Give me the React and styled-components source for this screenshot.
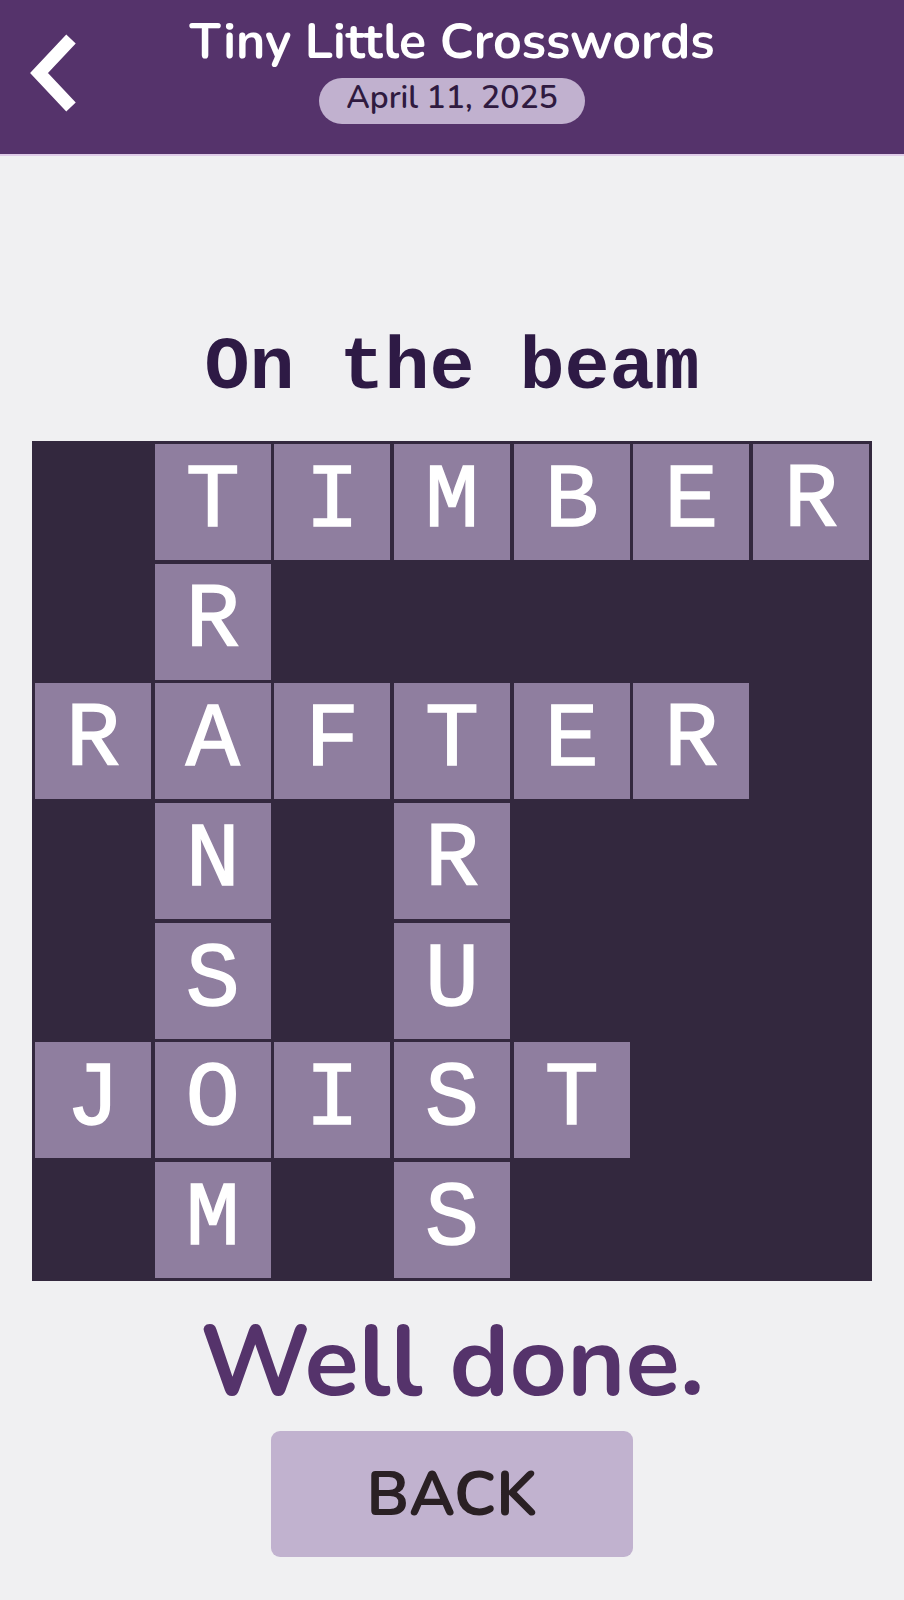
import React from 'react'
import styled, { createGlobalStyle } from 'styled-components'

const GlobalStyle = createGlobalStyle`
  html, body {
    margin: 0;
    padding: 0;
    background: #f0f0f2;
  }
  body {
    font-family: 'Nunito', 'Lato', 'Noto Sans', sans-serif;
  }
`

const typewriter = `'Courier New', 'Liberation Mono', monospace`

const rows = [
  ' TIMBER',
  ' R     ',
  'RAFTER ',
  ' N R   ',
  ' S U   ',
  'JOIST  ',
  ' M S   '
]

function App () {
  return (
    <>
      <GlobalStyle />
      <Page>
        <Header>
          <BackArrow aria-label='Back'>
            <svg width='60' height='80' viewBox='0 0 60 80'>
              <polyline
                points='47,5 15,39 47,73'
                fill='none'
                stroke='#fff'
                strokeWidth='13'
                strokeLinejoin='miter'
                strokeLinecap='butt'
              />
            </svg>
          </BackArrow>
          <TitleBlock>
            <Title>Tiny Little Crosswords</Title>
            <DatePill>April 11, 2025</DatePill>
          </TitleBlock>
        </Header>
        <Main>
          <Clue>On the beam</Clue>
          <Board>
            {rows.map((row, r) =>
              row.split('').map((ch, c) => (
                <Cell key={`${r}-${c}`} $open={ch !== ' '}>
                  {ch !== ' ' && ch}
                </Cell>
              ))
            )}
          </Board>
          <Message>Well done.</Message>
          <BackButton>BACK</BackButton>
        </Main>
      </Page>
    </>
  )
}

export default App

const Page = styled.div`
  min-height: 1600px;
  display: flex;
  flex-direction: column;
`

const Header = styled.header`
  height: 154px;
  background: #55336b;
  border-bottom: 2px solid #dfcce8;
  display: grid;
  grid-template-columns: 120px 1fr 120px;
  align-items: center;
`

const BackArrow = styled.div`
  justify-self: start;
  margin-left: 24px;
  margin-top: -6px;
  display: flex;
  cursor: pointer;
`

const TitleBlock = styled.div`
  display: flex;
  flex-direction: column;
  align-items: center;
  align-self: start;
  padding-top: 13px;
`

const Title = styled.h1`
  margin: 0 0 8px;
  font-size: 50px;
  line-height: 57px;
  font-weight: 700;
  color: #ffffff;
  white-space: nowrap;
`

const DatePill = styled.div`
  height: 40px;
  line-height: 40px;
  padding: 0 27px 6px;
  border-radius: 23px;
  background: #c1b1cf;
  color: #2f1a40;
  font-size: 32px;
  font-weight: 600;
`

const Main = styled.main`
  display: flex;
  flex-direction: column;
  align-items: center;
  padding-top: 168px;
`

const Clue = styled.h2`
  margin: 0 0 27px;
  font-family: ${typewriter};
  font-size: 75px;
  line-height: 90px;
  font-weight: 700;
  color: #2e1a45;
  white-space: pre;
`

const Board = styled.div`
  width: 840px;
  height: 840px;
  box-sizing: border-box;
  padding: 3px;
  background: #33283e;
  display: grid;
  grid-template-columns: repeat(7, 1fr);
  grid-template-rows: repeat(7, 1fr);
  gap: 3.5px;
`

const Cell = styled.div`
  background: ${p => (p.$open ? '#8f7e9f' : 'transparent')};
  display: flex;
  align-items: center;
  justify-content: center;
  font-family: ${typewriter};
  font-size: 90px;
  line-height: 1;
  color: #ffffff;
  -webkit-text-stroke: 1.5px #ffffff;
`

const Message = styled.div`
  margin-top: 26px;
  font-size: 100px;
  line-height: 110px;
  font-weight: 700;
  color: #55336b;
`

const BackButton = styled.button`
  margin-top: 14px;
  width: 362px;
  height: 126px;
  border: none;
  border-radius: 9px;
  background: #c1b2cf;
  color: #2a2024;
  font-family: 'Nunito', 'Lato', 'Noto Sans', sans-serif;
  font-size: 62px;
  font-weight: 700;
  display: flex;
  align-items: center;
  justify-content: center;
  cursor: pointer;
`
